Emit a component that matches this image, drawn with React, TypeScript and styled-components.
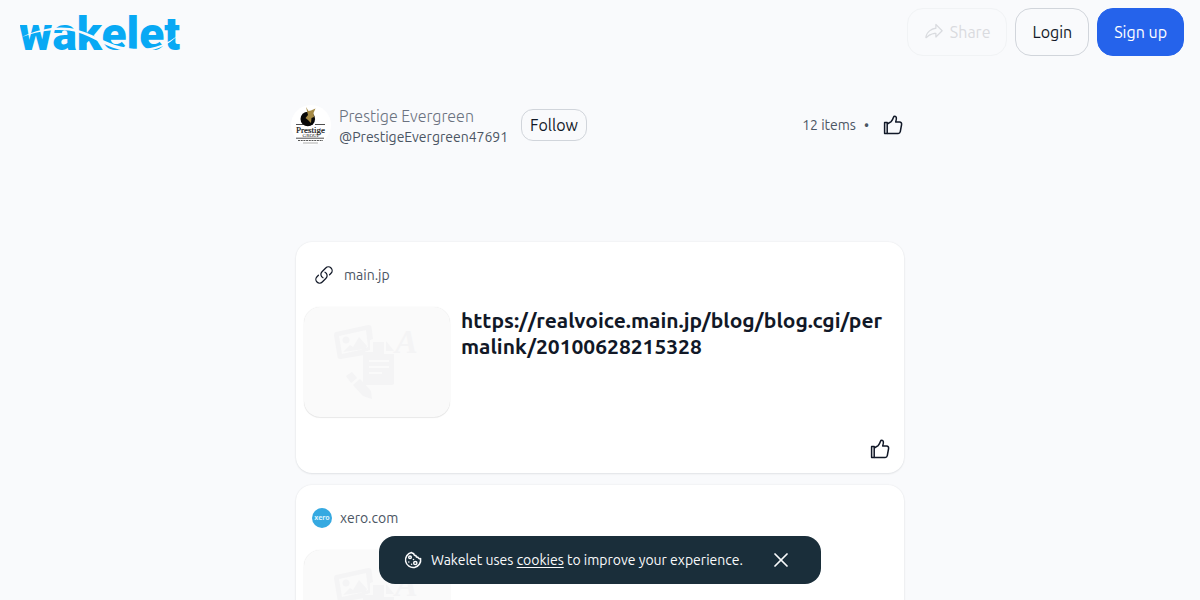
import React from "react";
import styled, { createGlobalStyle, css } from "styled-components";
import { HiOutlineLink } from "react-icons/hi2";
import { PiShareFat } from "react-icons/pi";
import { X } from "lucide-react";

const GlobalStyle = createGlobalStyle`
  * { box-sizing: border-box; }
  body {
    margin: 0;
    background: #f9fafc;
    color: #111827;
    font-family: Ubuntu, "Noto Sans", "Open Sans", sans-serif;
    font-size: 16px;
  }
  button { font-family: inherit; cursor: pointer; }
  html { scrollbar-width: none; }
`;

const TopBar = styled.header`
  display: flex;
  align-items: center;
  justify-content: space-between;
  height: 64px;
  padding: 0 16px 0 20px;
`;

const HomeLink = styled.a`
  display: flex;
`;

const Actions = styled.nav`
  display: flex;
  gap: 8px;
`;

type Tone = "outline" | "primary" | "muted";

const tones = {
  outline: css`
    background: #f9fafc;
    border-color: #d1d5db;
    color: #111827;
  `,
  primary: css`
    background: #2563eb;
    border-color: #2563eb;
    color: #ffffff;
  `,
  muted: css`
    background: transparent;
    border-color: #f1f3f5;
    color: #d9dbdf;
  `,
};

const Button = styled.button<{ $tone: Tone; $small?: boolean }>`
  display: inline-flex;
  align-items: center;
  justify-content: center;
  gap: 6px;
  height: ${(p) => (p.$small ? "32px" : "48px")};
  padding: ${(p) => (p.$small ? "0 8px" : "0 16px")};
  border: 1px solid;
  border-radius: ${(p) => (p.$small ? "12px" : "16px")};
  font-size: 16px;
  line-height: 24px;
  white-space: nowrap;
  ${(p) => tones[p.$tone]}
`;

const IconButton = styled.button`
  display: inline-flex;
  padding: 0;
  border: 0;
  background: none;
  color: inherit;
`;

const Column = styled.main`
  max-width: 608px;
  margin: 0 auto;
`;

const Profile = styled.section`
  display: flex;
  align-items: center;
  gap: 8px;
  height: 40px;
  margin: 41px 0 97px -5px;
`;

const Names = styled.div`
  display: flex;
  flex-direction: column;
  min-width: 174px;
  padding-top: 3px;
`;

const DisplayName = styled.span`
  font-size: 16px;
  font-weight: 300;
  line-height: 21px;
  color: #6b7280;
`;

const Handle = styled.a`
  font-size: 14px;
  line-height: 21px;
  color: #4b5563;
  text-decoration: none;
`;

const Stats = styled.div`
  display: flex;
  align-items: center;
  gap: 8px;
  margin-left: auto;
  padding-right: 1px;
  font-size: 14px;
  line-height: 20px;
  color: #4b5563;

  button { margin-left: 6px; color: #111827; }
`;

const CardList = styled.div`
  display: flex;
  flex-direction: column;
  gap: 12px;
`;

const CardBox = styled.article`
  display: flex;
  flex-direction: column;
  min-height: 231px;
  padding: 23px 14px 14px 8px;
  border-radius: 16px;
  background: #ffffff;
  box-shadow: 0 0 2px rgba(17, 24, 39, 0.08), 0 1px 2px rgba(17, 24, 39, 0.08);
`;

const Source = styled.a`
  display: flex;
  align-items: center;
  gap: 8px;
  height: 20px;
  padding-left: 8px;
  font-size: 14px;
  line-height: 20px;
  color: #4b5563;
  text-decoration: none;
`;

const LinkMark = styled.span`
  display: flex;
  justify-content: center;
  width: 24px;
  color: #111827;
`;

const CardBody = styled.div`
  display: flex;
  gap: 11px;
  margin-top: 22px;
`;

const Thumbnail = styled.div`
  flex: none;
  width: 146px;
  height: 110px;
  border-radius: 16px;
  background: #fafafa;
  box-shadow: 0 0 1px rgba(0, 0, 0, 0.12), 0 1px 1px rgba(0, 0, 0, 0.08);
`;

const CardTitle = styled.h2`
  margin: 0;
  font-size: 21px;
  font-weight: 600;
  line-height: 26px;
  color: #111827;
  word-break: break-all;
`;

const CardFooter = styled.footer`
  display: flex;
  justify-content: flex-end;
  margin-top: auto;
`;

const CookieBar = styled.aside`
  position: fixed;
  left: 50%;
  bottom: 16px;
  transform: translateX(-50%);
  display: flex;
  align-items: center;
  height: 48px;
  padding: 0 28px 0 25px;
  border-radius: 16px;
  background: #1a2e3a;
  color: #f9fafb;
  font-size: 14px;
  line-height: 20px;
  white-space: nowrap;

  p { min-width: 322px; margin: 0 16px 0 9px; }
  a { color: inherit; text-underline-offset: 2px; }
`;

const WakeletLogo = () => (
  <svg width="162" height="56" viewBox="0 0 162 56" role="img" aria-label="wakelet">
    <text x="-1" y="46" fontFamily="Roboto, sans-serif" fontWeight="900" fontSize="46" fill="#08a9f4">
      wakelet
    </text>
    <path d="M2 33C20 24 42 21 58 26C76 31 88 41 108 44C128 47 146 42 159 30C146 45 126 50 106 47C86 44 74 33 57 28C42 24 20 26 2 33Z" fill="#f9fafc" />
  </svg>
);

const ThumbIcon = () => (
  <svg width="20" height="20" viewBox="0 0 20 20" fill="none" stroke="currentColor" strokeWidth="1.5" strokeLinejoin="round" aria-hidden="true">
    <path d="M1.6 7.6H4.2V18.4H1.6Z" />
    <path d="M4.2 9L8.2 6.6C9.4 5.2 10 3.7 10.500 2.2C10.9 1 12.8.9 13.3 2.4C13.7 3.9 13.2 5.5 12.7 7H16.6C18.1 7 18.8 8 18.6 9.5L17.3 16.6C17 17.9 16.2 18.4 15.2 18.4H4.2" />
  </svg>
);

const CookieIcon = () => (
  <svg width="18" height="18" viewBox="0 0 18 18" fill="none" stroke="currentColor" strokeWidth="1.5" strokeLinejoin="round" strokeLinecap="round" aria-hidden="true">
    <path d="M7.5 1.5A7.6 7.6 0 1 0 16.6 7.6C15.5 8 14.3 7.5 14 6.3C12.7 6.3 11.9 5.7 11.9 4.5C10.7 4.6 9.8 4 9.7 2.6C8.9 2.7 8.1 2.3 7.5 1.5Z" />
    <circle cx="6" cy="6.2" r="1.3" />
    <circle cx="11.3" cy="12" r="1.6" />
    <circle cx="4.8" cy="11" r=".8" fill="currentColor" stroke="none" />
    <circle cx="9.5" cy="8.5" r=".8" fill="currentColor" stroke="none" />
    <circle cx="7.6" cy="13.2" r=".8" fill="currentColor" stroke="none" />
  </svg>
);

const Avatar = () => (
  <svg width="40" height="40" viewBox="0 0 40 40" role="img" aria-label="Prestige Group">
    <circle cx="20" cy="20" r="20" fill="#fff" />
    <circle cx="16.8" cy="14" r="7.3" fill="#080808" />
    <path d="M15 2L17.5 6L20 5.5L24.5 3.5L22.5 8L23 12L20.5 13L20 18L17 15L14.5 13L17 10Z" fill="#a58a45" />
    <path d="M5 19.5H13M24 19.5H34M5 33.2H33" stroke="#222" strokeWidth=".8" />
    <text x="19.5" y="28" textAnchor="middle" fontFamily="Liberation Serif, serif" fontSize="9" fill="#111" stroke="#111" strokeWidth=".2">Prestige</text>
    <text x="20" y="32" textAnchor="middle" fontFamily="Liberation Serif, serif" fontSize="5" fill="#111">GROUP</text>
    <path d="M7 35.5H32" stroke="#555" strokeWidth="1.2" strokeDasharray="2 .7" />
    <path d="M12 38H27" stroke="#777" strokeWidth=".6" />
  </svg>
);

const XeroIcon = () => (
  <svg width="20" height="20" viewBox="0 0 20 20" role="img" aria-label="Xero">
    <circle cx="10" cy="10" r="10" fill="#35a9e1" />
    <text x="10" y="12" textAnchor="middle" fontFamily="Noto Sans, sans-serif" fontWeight="700" fontSize="7" fill="#d9f1fc">xero</text>
  </svg>
);

const PlaceholderArt = () => (
  <svg width="146" height="110" viewBox="0 0 146 110" aria-hidden="true">
    <g fill="#f4f4f5">
      <path fillRule="evenodd" d="M32 25L64 18Q67 17.5 67.5 20L69 32L66 33V43L60 45V48L37 52Q34 52.5 33.5 50L30 28Q29.8 25.5 32 25ZM35 29L38 47L56 43L64 40L62 23Z" />
      <circle cx="42" cy="33" r="3.5" />
      <path d="M39 45L46 38L49 40L55 30L63 39L61 42Z" />
      <text x="91" y="46" fontFamily="Liberation Serif, serif" fontStyle="italic" fontWeight="700" fontSize="34">A</text>
      <path fillRule="evenodd" d="M59 45H69V35H80V47H90V76Q90 78 88 78H61Q59 78 59 76ZM65 53V55H85V53ZM65 59V61H85V59ZM65 65V67H78V65Z" />
      <path d="M82 34L90 44H82ZM42 69L48 65L53 71L47 76ZM49 78L56 72L67 84L68 92L59 89Z" />
    </g>
  </svg>
);

type CardProps = { mark: React.ReactNode; site: string; href: string; title?: string };

const Card = ({ mark, site, href, title }: CardProps) => (
  <CardBox>
    <Source href={href}>
      {mark}
      {site}
    </Source>
    <CardBody>
      <Thumbnail>
        <PlaceholderArt />
      </Thumbnail>
      {title && <CardTitle>{title}</CardTitle>}
    </CardBody>
    <CardFooter>
      <IconButton type="button" aria-label="Like">
        <ThumbIcon />
      </IconButton>
    </CardFooter>
  </CardBox>
);

export default function App() {
  return (
    <>
      <GlobalStyle />
      <TopBar>
        <HomeLink href="#">
          <WakeletLogo />
        </HomeLink>
        <Actions>
          <Button type="button" $tone="muted" disabled>
            <PiShareFat size={20} />
            Share
          </Button>
          <Button type="button" $tone="outline">Login</Button>
          <Button type="button" $tone="primary">Sign up</Button>
        </Actions>
      </TopBar>
      <Column>
        <Profile>
          <Avatar />
          <Names>
            <DisplayName>Prestige Evergreen</DisplayName>
            <Handle href="#">@PrestigeEvergreen47691</Handle>
          </Names>
          <Button type="button" $tone="outline" $small>Follow</Button>
          <Stats>
            <span>12 items</span>
            <span>•</span>
            <IconButton type="button" aria-label="Like collection">
              <ThumbIcon />
            </IconButton>
          </Stats>
        </Profile>
        <CardList>
          <Card
            mark={<LinkMark><HiOutlineLink size={20} /></LinkMark>}
            site="main.jp"
            href="#"
            title="https://realvoice.main.jp/blog/blog.cgi/permalink/20100628215328"
          />
          <Card mark={<XeroIcon />} site="xero.com" href="#" />
        </CardList>
      </Column>
      <CookieBar>
        <CookieIcon />
        <p>
          Wakelet uses <a href="#">cookies</a> to improve your experience.
        </p>
        <IconButton type="button" aria-label="Close">
          <X size={24} strokeWidth={1.75} />
        </IconButton>
      </CookieBar>
    </>
  );
}
